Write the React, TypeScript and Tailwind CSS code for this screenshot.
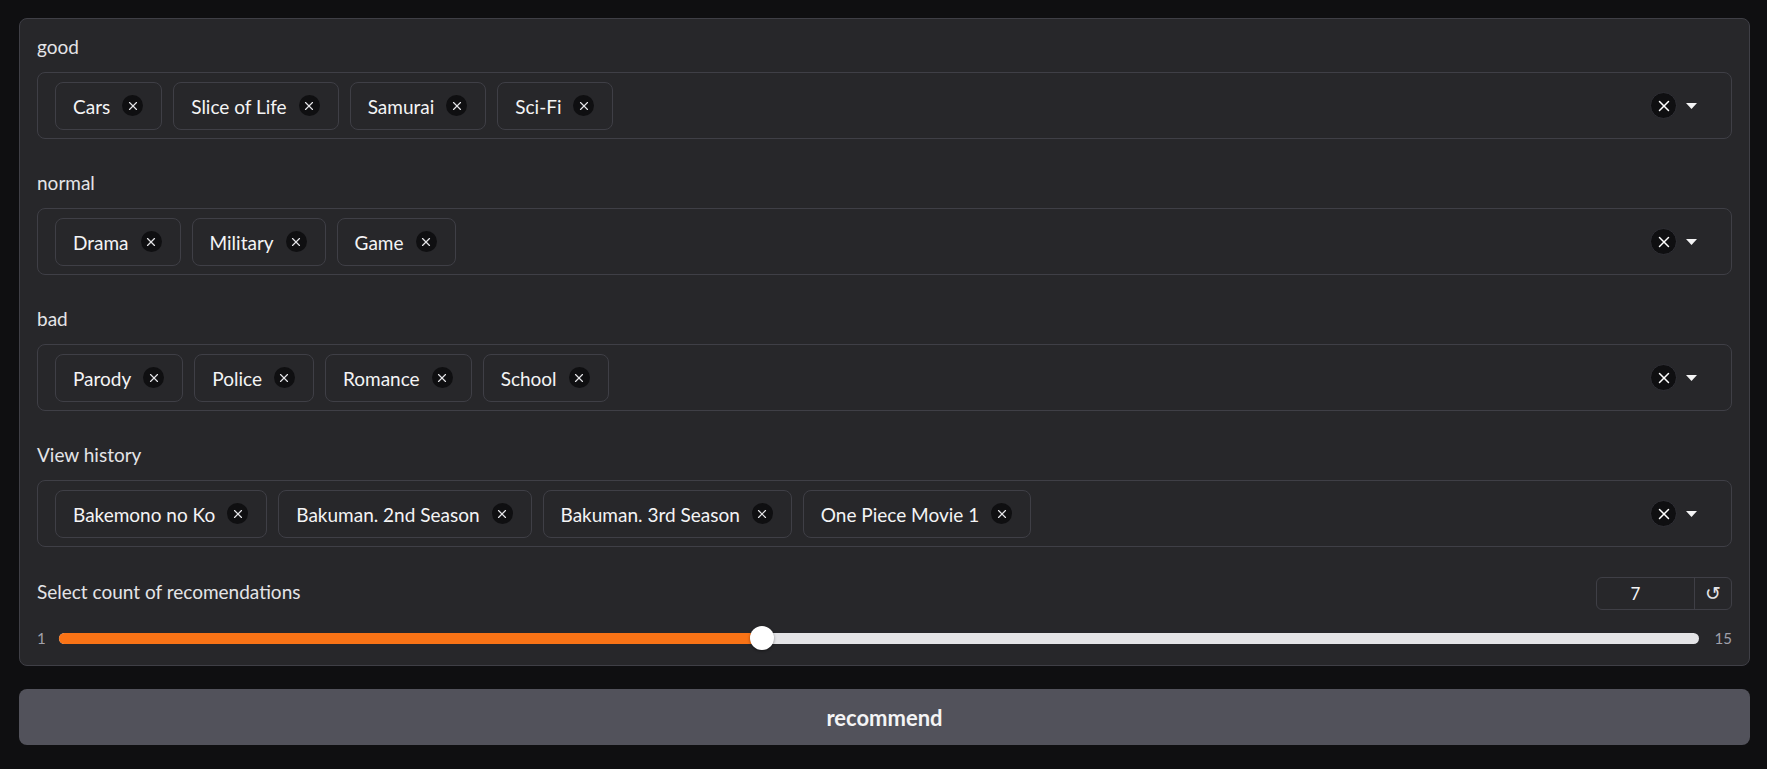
import { X } from "lucide-react"

const groups = [
  { label: "good", items: ["Cars", "Slice of Life", "Samurai", "Sci-Fi"] },
  { label: "normal", items: ["Drama", "Military", "Game"] },
  { label: "bad", items: ["Parody", "Police", "Romance", "School"] },
  {
    label: "View history",
    items: ["Bakemono no Ko", "Bakuman. 2nd Season", "Bakuman. 3rd Season", "One Piece Movie 1"],
  },
]

const Chip = ({ text }: { text: string }) => (
  <div className="flex items-center h-[48px] pl-[17px] pr-[18px] gap-[12px] rounded-lg border border-[#3f3f46] bg-[#27272a]">
    <span className="text-[19px] text-[#f4f4f5] leading-none pt-[1px]">{text}</span>
    <span className="flex items-center justify-center w-[21px] h-[21px] rounded-full bg-[#0f0f11]">
      <X size={14} strokeWidth={2} className="text-[#e4e4e7]" />
    </span>
  </div>
)

const MultiSelect = ({ label, items }: { label: string; items: string[] }) => (
  <div className="flex flex-col gap-[14px]">
    <label className="h-[22px] leading-[22px] text-[19px] text-[#e4e4e7]">{label}</label>
    <div className="flex items-center h-[67px] pl-[17px] pr-[34px] rounded-lg border border-[#3f3f46] bg-[#27272a]">
      <div className="flex flex-1 items-center gap-[11px]">
        {items.map((item) => (
          <Chip key={item} text={item} />
        ))}
      </div>
      <span className="flex items-center justify-center w-[27px] h-[27px] rounded-full bg-[#0f0f11] border border-[#2f2f35]">
        <X size={18} strokeWidth={2} className="text-white" />
      </span>
      <svg className="ml-[9px]" width="11" height="6" viewBox="0 0 11 6">
        <path d="M0 0 L11 0 L5.5 6 Z" fill="#f4f4f5" />
      </svg>
    </div>
  </div>
)

export default function App() {
  return (
    <div
      className="min-h-[769px] bg-[#0f0f11] pl-[19px] pr-[17px] pt-[18px]"
      style={{ fontFamily: "Lato, 'Noto Sans', sans-serif" }}
    >
      <div className="flex flex-col rounded-lg border border-[#3f3f46] bg-[#27272a] px-[17px] pt-[17px] pb-[15px]">
        <div className="flex flex-col gap-[33px]">
          {groups.map((g) => (
            <MultiSelect key={g.label} label={g.label} items={g.items} />
          ))}
        </div>

        <div className="mt-[30px] flex items-center justify-between h-[33px]">
          <span className="text-[19px] text-[#e4e4e7] leading-[22px] -mt-[4px]">Select count of recomendations</span>
          <div className="flex h-[33px] w-[136px] rounded-md border border-[#3f3f46]">
            <span className="flex-1 flex items-center justify-center pr-[20px] text-[17px] text-[#f4f4f5]">7</span>
            <span className="w-[37px] flex items-center justify-center border-l border-[#3f3f46] text-[19px] text-[#e4e4e7]">
              ↺
            </span>
          </div>
        </div>

        <div className="mt-[16px] flex items-center h-[24px]">
          <span className="w-[22px] text-[15px] text-[#a1a1aa]">1</span>
          <div className="relative flex-1 h-[11px] rounded-full bg-[#e4e4e7]">
            <div className="absolute left-0 top-0 h-full w-[42.86%] rounded-full bg-[#f97316]" />
            <div className="absolute left-[42.86%] top-1/2 -translate-x-1/2 -translate-y-1/2 w-[24px] h-[24px] rounded-full bg-white shadow-[0_1px_3px_rgba(0,0,0,0.4)]" />
          </div>
          <span className="w-[33px] text-right text-[15px] text-[#a1a1aa]">15</span>
        </div>
      </div>

      <button className="mt-[23px] w-full h-[56px] rounded-lg bg-[#52525b] text-[22px] font-bold text-[#f4f4f5]">
        recommend
      </button>
    </div>
  )
}
